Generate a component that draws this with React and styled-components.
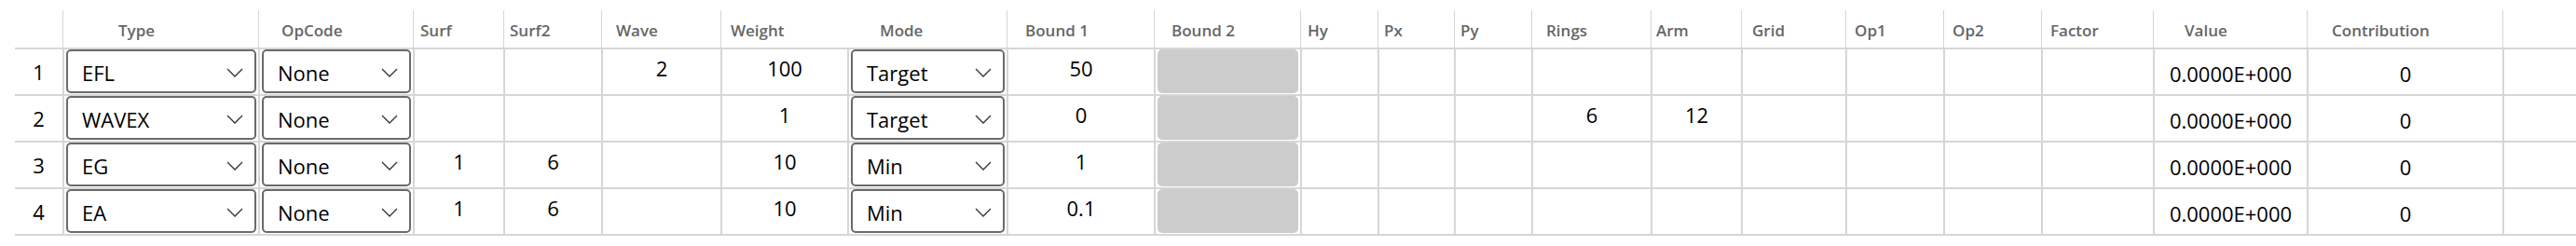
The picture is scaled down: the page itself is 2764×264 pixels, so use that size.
import styled, { createGlobalStyle, css } from "styled-components";

const columns = [
  { key: "type", title: "Type", width: 210, pad: 59, kind: "combo" },
  { key: "op", title: "OpCode", width: 166, pad: 24, kind: "combo" },
  { key: "surf", title: "Surf", width: 97, pad: 7 },
  { key: "surf2", title: "Surf2", width: 105, pad: 6 },
  { key: "wave", title: "Wave", width: 128, pad: 15 },
  { key: "weight", title: "Weight", width: 136, pad: 10 },
  { key: "mode", title: "Mode", width: 171, pad: 35, kind: "combo", joined: true },
  { key: "b1", title: "Bound 1", width: 158, pad: 19 },
  { key: "b2", title: "Bound 2", width: 157, pad: 18, kind: "disabled" },
  { key: "hy", title: "Hy", width: 83, pad: 7 },
  { key: "px", title: "Px", width: 82, pad: 6 },
  { key: "py", title: "Py", width: 83, pad: 6 },
  { key: "rings", title: "Rings", width: 128, pad: 15 },
  { key: "arm", title: "Arm", width: 97, pad: 5 },
  { key: "grid", title: "Grid", width: 112, pad: 11 },
  { key: "op1", title: "Op1", width: 105, pad: 9 },
  { key: "op2", title: "Op2", width: 105, pad: 9 },
  { key: "factor", title: "Factor", width: 120, pad: 9 },
  { key: "value", title: "Value", width: 165, pad: 33, kind: "readonly" },
  { key: "contrib", title: "Contribution", width: 210, pad: 26, kind: "readonly" },
];

const rows = [
  { type: "EFL", op: "None", wave: "2", weight: "100", mode: "Target", b1: "50", value: "0.0000E+000", contrib: "0" },
  { type: "WAVEX", op: "None", weight: "1", mode: "Target", b1: "0", rings: "6", arm: "12", value: "0.0000E+000", contrib: "0" },
  { type: "EG", op: "None", surf: "1", surf2: "6", weight: "10", mode: "Min", b1: "1", value: "0.0000E+000", contrib: "0" },
  { type: "EA", op: "None", surf: "1", surf2: "6", weight: "10", mode: "Min", b1: "0.1", value: "0.0000E+000", contrib: "0" },
];

const template = `51px ${columns.map((c) => c.width + "px").join(" ")} 1fr`;

const Global = createGlobalStyle`
  body {
    margin: 0;
    background: #fff;
    font-family: "Open Sans", "Noto Sans", sans-serif;
    color: #000;
  }
`;

const Grid = styled.div`
  padding: 11px 0 0 16px;
`;

const Row = styled.div`
  display: grid;
  grid-template-columns: ${template};
  height: ${(p) => (p.$head ? 42 : 50)}px;
  box-sizing: border-box;
  border-bottom: 2px solid #d6d6d6;
`;

const HeadCell = styled.div`
  display: flex;
  align-items: center;
  padding: 3px 0 0 ${(p) => p.$pad || 0}px;
  border-left: ${(p) => (p.$plain ? "none" : "1px solid #d6d6d6")};
  font-size: 17px;
  font-weight: 600;
  color: #666;
  white-space: nowrap;
  overflow: hidden;
`;

const RowNum = styled.div`
  display: flex;
  align-items: center;
  justify-content: center;
  font-size: 22px;
`;

const Cell = styled.div`
  display: flex;
  align-items: center;
  justify-content: center;
  box-sizing: border-box;
  border-left: 2px solid #d6d6d6;
  font-size: 22px;
  white-space: nowrap;
  ${(p) =>
    p.$kind === "edit" &&
    css`
      padding-bottom: 9px;
    `}
  ${(p) =>
    p.$kind === "readonly" &&
    css`
      padding-top: 3px;
    `}
  ${(p) =>
    (p.$kind === "combo" || p.$kind === "disabled") &&
    css`
      align-items: stretch;
      padding: 0 2px 1px 2px;
    `}
`;

const Combo = styled.div`
  flex: 1;
  display: flex;
  align-items: center;
  justify-content: space-between;
  box-sizing: border-box;
  border: 2px solid #6a6a6a;
  border-radius: 5px;
  padding: 2px 12px 0 15px;
  background: #fff;
`;

const Disabled = styled.div`
  flex: 1;
  background: #cccccc;
  border-radius: 5px;
`;

const Chevron = () => (
  <svg width="18" height="10" viewBox="0 0 18 10">
    <polyline points="1,1 9,9 17,1" fill="none" stroke="#333" strokeWidth="1.3" />
  </svg>
);

const Filler = styled.div`
  border-left: ${(p) => (p.$head ? 1 : 2)}px solid #d6d6d6;
`;

const renderCell = (col, row) => {
  const v = row[col.key];
  if (col.kind === "combo") {
    return (
      <Cell key={col.key} $kind="combo">
        <Combo>
          <span>{v}</span>
          <Chevron />
        </Combo>
      </Cell>
    );
  }
  if (col.kind === "disabled") {
    return (
      <Cell key={col.key} $kind="disabled">
        <Disabled />
      </Cell>
    );
  }
  return (
    <Cell key={col.key} $kind={col.kind || "edit"}>
      {v}
    </Cell>
  );
};

export default function App() {
  return (
    <>
      <Global />
      <Grid>
        <Row $head>
          <div />
          {columns.map((c) => (
            <HeadCell key={c.key} $pad={c.pad} $plain={c.joined}>
              {c.title}
            </HeadCell>
          ))}
          <Filler $head />
        </Row>
        {rows.map((r, i) => (
          <Row key={i}>
            <RowNum>{i + 1}</RowNum>
            {columns.map((c) => renderCell(c, r))}
            <Filler />
          </Row>
        ))}
      </Grid>
    </>
  );
}
